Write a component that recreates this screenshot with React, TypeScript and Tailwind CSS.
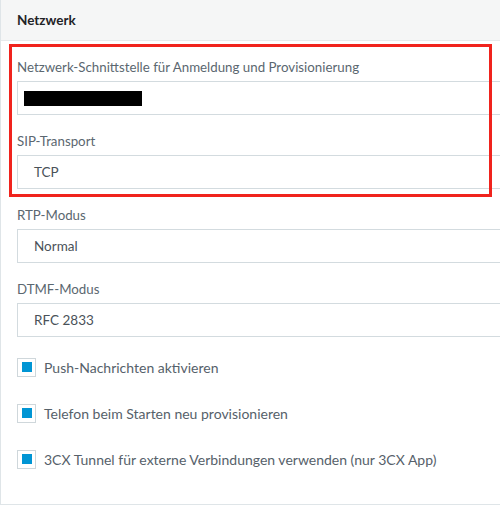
import React from "react";

const fields = [
  { label: "Netzwerk-Schnittstelle für Anmeldung und Provisionierung", value: null },
  { label: "SIP-Transport", value: "TCP" },
  { label: "RTP-Modus", value: "Normal" },
  { label: "DTMF-Modus", value: "RFC 2833" },
];

const options = [
  "Push-Nachrichten aktivieren",
  "Telefon beim Starten neu provisionieren",
  "3CX Tunnel für externe Verbindungen verwenden (nur 3CX App)",
];

export default function App() {
  return (
    <div
      className="relative w-[500px] h-[505px] overflow-hidden bg-white border-l border-b border-[#dfe5e8] text-[14px]"
      style={{ fontFamily: "Lato, 'Noto Sans', sans-serif" }}
    >
      {/* Header */}
      <div className="h-[41px] bg-[#f5f6f6] border-b border-[#e6eaec] flex items-center pl-4">
        <span className="font-bold text-[#1f2326] text-[13.5px]">Netzwerk</span>
      </div>

      {/* Form */}
      <div className="pl-4 pt-4">
        <div className="flex flex-col gap-4">
          {fields.map((f) => (
            <div key={f.label} className="flex flex-col gap-1">
              <label className="h-5 leading-5 text-[13.3px] text-[#5b6770]">{f.label}</label>
              <div className="w-[520px] h-[34px] border border-[#d3dbdf] bg-white flex items-center pl-4 text-[13.5px] text-[#4a5259]">
                {f.value ?? <span className="block w-[118px] h-[15px] bg-black -ml-[10px]" />}
              </div>
            </div>
          ))}
        </div>

        <div className="mt-5 flex flex-col gap-[26px]">
          {options.map((o) => (
            <div key={o} className="flex items-center gap-2 h-5">
              <span className="w-[19px] h-[19px] border border-[#cfd7db] flex items-center justify-center">
                <span className="w-[10px] h-[10px] bg-[#0095d4]" />
              </span>
              <span className="text-[#56616a]">{o}</span>
            </div>
          ))}
        </div>
      </div>

      {/* Annotation */}
      <div className="absolute left-[8px] top-[44px] w-[483px] h-[153px] border-[3px] border-[#f0231d] pointer-events-none" />
    </div>
  );
}
